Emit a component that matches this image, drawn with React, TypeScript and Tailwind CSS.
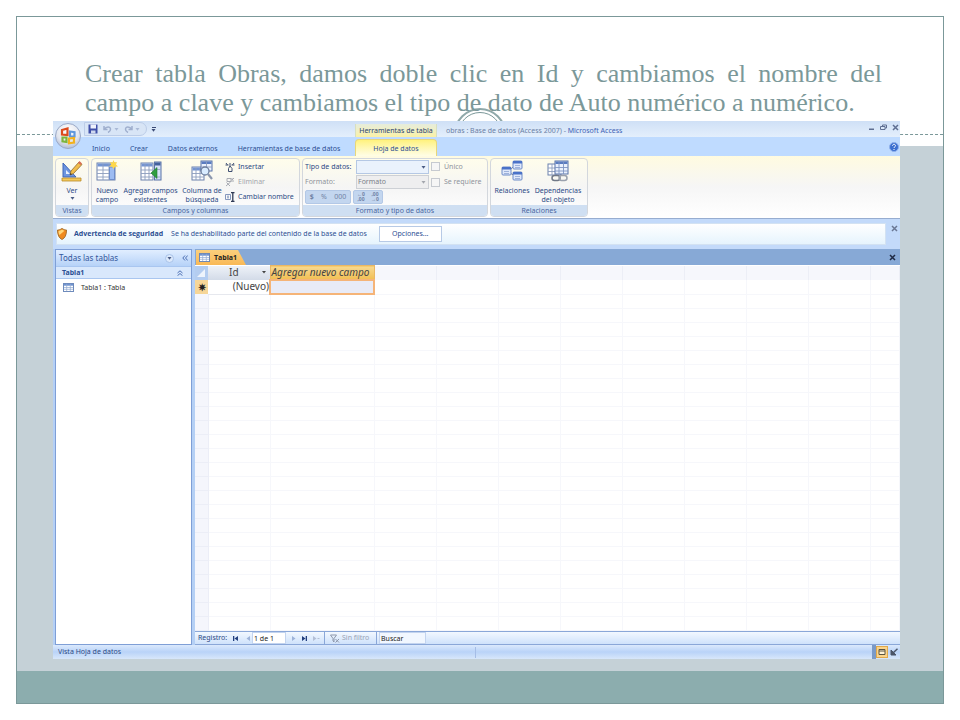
import type { ReactNode } from 'react';

const EMPTY_ROWS = Array.from({ length: 24 }, (_, i) => i);
const EMPTY_COLS = Array.from({ length: 9 }, (_, i) => i);

function OfficeLogo() {
  return (
    <svg viewBox="0 0 28 28" className="h-7 w-7">
      <defs>
        <radialGradient id="orb" cx="0.5" cy="0.3" r="0.75">
          <stop offset="0" stopColor="#ffffff" />
          <stop offset="0.6" stopColor="#e3e6ee" />
          <stop offset="1" stopColor="#a9b6cf" />
        </radialGradient>
      </defs>
      <circle cx="14" cy="14" r="12.5" fill="url(#orb)" stroke="#9aa9c8" />
      <g fill="none" strokeWidth="2.2">
        <path d="M8 8l5.500-1.500v6.500l-5.500-.4z" stroke="#dd4b1e" />
        <path d="M16 9.500l4.500.6v4.400H16z" stroke="#5f97dc" />
        <path d="M8.500 15.500h4v4.500l-4-.6z" stroke="#7cb53c" />
        <path d="M15 16.500l5-.5v4.500l-5 .8z" stroke="#f2b21f" />
      </g>
    </svg>
  );
}

function SheetIcon({ className }: { className: string }) {
  return (
    <svg viewBox="0 0 12 10" className={className}>
      <rect x="0.500" y="0.500" width="11" height="9" fill="#fff" stroke="#5f7fb5" />
      <path d="M1 1h10v2H1z" fill="#6f93d0" />
      <path d="M4 1v8M8 1v8M1 5h10M1 7h10" stroke="#93abd2" strokeWidth="0.800" />
    </svg>
  );
}

function ViewIcon() {
  return (
    <svg viewBox="0 0 22 22" className="h-[22px] w-[22px]">
      <path d="M2 3v14h13z" fill="#6d95e0" stroke="#3f66b8" />
      <path d="M5 10v4h4z" fill="#e9f0fc" />
      <path d="M1 18h19v3H1z" fill="#f4c95a" stroke="#b98a28" strokeWidth="0.800" />
      <path d="M9 15l1-4 8-9 3 2.500-8.500 9z" fill="#f2bd4a" stroke="#8d6a2c" strokeWidth="0.800" />
      <path d="M17 3l1.500-2L21 3.500 19.500 5z" fill="#d86f55" />
      <path d="M9 15l.5-2 1.500 1.200z" fill="#333" />
    </svg>
  );
}

function NewFieldIcon() {
  return (
    <svg viewBox="0 0 22 22" className="h-[22px] w-[22px]">
      <rect x="1" y="3" width="18" height="17" fill="#fff" stroke="#6c82ad" />
      <path d="M1.500 3.500h17v3h-17z" fill="#7394d2" />
      <path d="M7 4v16M13 4v16M1 10h18M1 13.500h18M1 17h18" stroke="#8c9dbd" strokeWidth="0.900" />
      <path d="M13.500 7h5v12.500h-5z" fill="#9dbcf2" stroke="#5f82c4" strokeWidth="0.800" />
      <path d="M17.500 0l1 2.500L21 2l-1 2.500L22 6.500l-3 .3L17.500 9l-1.300-2.300-3-.2 2-2L14 2l2.500.5z" fill="#ffd84a" />
    </svg>
  );
}

function AddFieldsIcon() {
  return (
    <svg viewBox="0 0 22 22" className="h-[22px] w-[22px]">
      <rect x="1" y="3" width="12" height="17" fill="#fff" stroke="#6c82ad" />
      <path d="M1.500 3.500h11v3h-11z" fill="#7394d2" />
      <path d="M5 4v16M9 4v16M1 10h12M1 13.500h12M1 17h12" stroke="#8c9dbd" strokeWidth="0.900" />
      <rect x="14.500" y="2" width="6.500" height="18" fill="#d6e2f8" stroke="#5873a8" />
      <path d="M15 2.500h5.500v3H15z" fill="#44619c" />
      <path d="M15 9.500h5.500M15 17h5.500" stroke="#8c9dbd" strokeWidth="0.800" />
      <path d="M11 13l6-5.500v11z" fill="#2f9e3f" stroke="#1c7a2b" strokeWidth="0.600" />
    </svg>
  );
}

function LookupIcon() {
  return (
    <svg viewBox="0 0 22 22" className="h-[22px] w-[22px]">
      <rect x="1" y="7" width="12" height="13" fill="#fff" stroke="#6c82ad" />
      <path d="M1.500 7.500h11v3h-11z" fill="#7394d2" />
      <path d="M5 8v12M9 8v12M1 13.500h12M1 17h12" stroke="#8c9dbd" strokeWidth="0.900" />
      <rect x="10" y="1" width="11" height="10" fill="#eaf1fd" stroke="#5873a8" />
      <path d="M10.500 1.500h10v2.500h-10z" fill="#5a7cc0" />
      <path d="M15.500 2v9M10 7h11" stroke="#8c9dbd" strokeWidth="0.900" />
      <circle cx="14" cy="11" r="4" fill="#d9ecff" stroke="#6e7f9e" strokeWidth="1.300" />
      <path d="M17 14l4 5" stroke="#8b97ad" strokeWidth="2.200" />
    </svg>
  );
}

function RelationsIcon() {
  return (
    <svg viewBox="0 0 22 22" className="h-[22px] w-[22px]">
      <path d="M8 11l5-5M9 13l5 3" stroke="#7d8797" />
      {[
        [1, 7],
        [12, 1],
        [12, 12],
      ].map(([x, y]) => (
        <g key={`${x}-${y}`}>
          <rect x={x} y={y} width="9" height="8" rx="1" fill="#dfe8fa" stroke="#6d8bc8" />
          <path d={`M${x} ${y}h9v2.500h-9z`} fill="#4a72c8" />
          <path d={`M${x + 2} ${y + 4.5}h5M${x + 2} ${y + 6.5}h5`} stroke="#8ea5d3" strokeWidth="0.800" />
        </g>
      ))}
    </svg>
  );
}

function DependenciesIcon() {
  return (
    <svg viewBox="0 0 22 22" className="h-[22px] w-[22px]">
      <rect x="1" y="4" width="13" height="11" fill="#fff" stroke="#6c82ad" />
      <path d="M5 4v11M9 4v11M1 8h13M1 11.500h13" stroke="#8c9dbd" strokeWidth="0.900" />
      <rect x="8" y="1" width="13" height="13" fill="#eaf1fd" stroke="#5873a8" />
      <path d="M8.500 1.500h12v2.500h-12z" fill="#5a7cc0" />
      <path d="M12 2v12M16.500 2v12M8 7.500h13M8 11h13" stroke="#7f95c2" strokeWidth="0.900" />
      <rect x="5" y="15.500" width="8" height="5" rx="2.500" fill="none" stroke="#707887" strokeWidth="1.500" />
      <rect x="12" y="15.500" width="8" height="5" rx="2.500" fill="none" stroke="#9aa1ad" strokeWidth="1.500" />
    </svg>
  );
}

function Caret({ className = 'fill-[#4a5c85]' }: { className?: string }) {
  return (
    <svg viewBox="0 0 5 3" className={`h-[3px] w-[5px] ${className}`}>
      <path d="M0.500 0h4L2.500 2.800z" />
    </svg>
  );
}

function CloseIcon({ className }: { className: string }) {
  return (
    <svg viewBox="0 0 7 7" className={`h-[7px] w-[7px] ${className}`} fill="none" strokeWidth="1.500">
      <path d="M1 1l5 5M6 1L1 6" />
    </svg>
  );
}

function Group({ title, className, children }: { title: string; className: string; children: ReactNode }) {
  return (
    <section
      className={`flex h-[59px] flex-col overflow-hidden rounded-sm border border-[#d3d7dd] bg-linear-to-b from-[#fffdeb] via-[#f5f5f5] to-white ${className}`}
    >
      <div className="flex flex-1 items-start">{children}</div>
      <h2 className="h-[11px] bg-[#cfdff2] text-center leading-[11px] text-[#4a66a0]">{title}</h2>
    </section>
  );
}

type BigButtonProps = { lines: string[]; menu?: boolean; className: string; children: ReactNode };

function BigButton({ lines, menu, className, children }: BigButtonProps) {
  return (
    <button className={`flex flex-col items-center pt-px leading-[9px] whitespace-nowrap ${className}`}>
      {children}
      <span className="mt-1">{lines[0]}</span>
      {lines[1] && <span>{lines[1]}</span>}
      {menu && <Caret className="mt-[2px] fill-[#4a5c85]" />}
    </button>
  );
}

function TitleBar() {
  return (
    <div className="flex h-4 items-stretch bg-linear-to-b from-[#cfe0f6] to-[#e4effc]">
      <div className="flex w-[302px] items-center pl-[31px]">
        <div className="flex h-[14px] items-center gap-[5px] rounded-r-full border border-[#bccde8] bg-[#d8e5f6] pr-[6px] pl-[3px]">
          <button aria-label="Guardar">
            <svg viewBox="0 0 10 10" className="h-[10px] w-[10px]">
              <path d="M0.500 0.500h9v9h-9z" fill="#3f4fa8" />
              <path d="M2.500 0.500h5.500v4H2.500z" fill="#eef2fc" />
              <path d="M3 6.500h4.500v3H3z" fill="#cfd8ee" />
            </svg>
          </button>
          <button aria-label="Deshacer" className="flex items-center gap-[2px]">
            <svg viewBox="0 0 9 8" className="h-2 w-[9px]" fill="none" stroke="#9fafce" strokeWidth="1.500">
              <path d="M1 1v3.500h3.500M1.500 4C3 1.500 7.500 1 7.500 4.200 7.500 6 6 7 5 7.500" />
            </svg>
            <Caret className="fill-[#a9b9d6]" />
          </button>
          <button aria-label="Rehacer" className="flex items-center gap-[2px]">
            <svg viewBox="0 0 9 8" className="h-2 w-[9px]" fill="none" stroke="#9fafce" strokeWidth="1.500">
              <path d="M8 1v3.500H4.500M7.500 4C6 1.500 1.500 1 1.500 4.200 1.500 6 3 7 4 7.500" />
            </svg>
            <Caret className="fill-[#a9b9d6]" />
          </button>
        </div>
        <button aria-label="Personalizar" className="ml-1 flex flex-col items-center gap-px">
          <span className="h-px w-1 bg-[#3b4a75]" />
          <Caret className="fill-[#3b4a75]" />
        </button>
      </div>
      <div className="mt-[3px] w-[82px] border-x border-[#d8dfc0] bg-linear-to-b from-[#e6ecdc] to-[#fbf2a6] text-center leading-[13px] whitespace-nowrap text-[#2b4370]">
        Herramientas de tabla
      </div>
      <h1 className="ml-[9px] flex-1 pt-[3px] leading-[13px] text-[#6b7fa5]">
        obras : Base de datos (Access 2007) - <span className="text-[#3d62b5]">Microsoft Access</span>
      </h1>
      <div className="flex items-start gap-[5px] pt-[3px] pr-px">
        <button aria-label="Minimizar">
          <svg viewBox="0 0 7 7" className="h-[7px] w-[7px]">
            <path d="M1 4.500h5v1.500H1z" fill="#5f6f92" />
          </svg>
        </button>
        <button aria-label="Restaurar">
          <svg viewBox="0 0 7 7" className="h-[7px] w-[7px]" fill="none" stroke="#5f6f92">
            <path d="M2.500 2.500V1h4v3H5M0.500 2.500h4.500v3H0.500z" />
          </svg>
        </button>
        <button aria-label="Cerrar">
          <CloseIcon className="stroke-[#5f6f92]" />
        </button>
      </div>
    </div>
  );
}

function RibbonTabs() {
  return (
    <nav className="flex h-[19px] items-stretch bg-[#bfdbff] text-[#2c4f93]">
      <div className="flex w-[302px] items-center gap-5 pt-1 pl-[39px] whitespace-nowrap">
        <a href="#inicio">Inicio</a>
        <a href="#crear">Crear</a>
        <a href="#externos">Datos externos</a>
        <a href="#herramientas">Herramientas de base de datos</a>
      </div>
      <a
        href="#hoja"
        className="mt-[2px] flex w-[82px] items-center justify-center rounded-t-sm border-x border-t border-[#e8d77a] bg-linear-to-b from-[#fff27c] to-[#fffde6] pt-[2px]"
      >
        Hoja de datos
      </a>
      <button aria-label="Ayuda" className="mr-px ml-auto">
        <svg viewBox="0 0 10 10" className="h-[10px] w-[10px]">
          <circle cx="5" cy="5" r="4.500" fill="#3b6fd0" stroke="#8fb0ea" />
          <path d="M3.500 3.800c0-2 3-2 3 0 0 1-1.500 1-1.500 2.200M5 7v1" stroke="#fff" fill="none" />
        </svg>
      </button>
    </nav>
  );
}

function Ribbon() {
  return (
    <div className="flex gap-[2px] border-b border-[#97add0] bg-linear-to-b from-[#fffbe0] via-[#f6f6f6] to-white px-[2px] pt-[2px] pb-px text-[#2c4a85]">
      <Group title="Vistas" className="w-[34px]">
        <BigButton lines={['Ver']} menu className="w-full">
          <ViewIcon />
        </BigButton>
      </Group>

      <Group title="Campos y columnas" className="w-[209px]">
        <BigButton lines={['Nuevo', 'campo']} className="w-[30px]">
          <NewFieldIcon />
        </BigButton>
        <BigButton lines={['Agregar campos', 'existentes']} className="w-[57px]">
          <AddFieldsIcon />
        </BigButton>
        <BigButton lines={['Columna de', 'búsqueda']} className="w-[46px]">
          <LookupIcon />
        </BigButton>
        <div className="flex flex-col whitespace-nowrap">
          <button className="flex h-[15px] items-center gap-[3px]">
            <svg viewBox="0 0 10 10" className="h-[10px] w-[10px]" fill="none" stroke="#3f4f72">
              <path d="M1 1l1.500 2M9 1L7.500 3M0.500 3h3M6.500 3h3M3.500 9.500h3.500V6.500L5 4 3.500 6.500zM5 1v3" />
            </svg>
            Insertar
          </button>
          <button className="flex h-[15px] items-center gap-[3px] text-[#a3a6ad]" disabled>
            <svg viewBox="0 0 10 10" className="h-[10px] w-[10px]" fill="none" stroke="#a8abb3">
              <path d="M2 1.500h4v3H2zM1 9l4.500-4M1.500 5.500L5 9M9 1L7 3M6 4h3M7 1v2" />
            </svg>
            Eliminar
          </button>
          <button className="flex h-4 items-center gap-[3px]">
            <svg viewBox="0 0 10 10" className="h-[10px] w-[10px]" fill="none" stroke="#2f3a55">
              <path d="M0.500 2.500h5v5h-5zM2 4.200h2M2 5.800h2" stroke="#8497bd" />
              <path d="M6 0.500h3.500M6 9.500h3.500M7.800 0.500v9" strokeWidth="1.300" />
            </svg>
            Cambiar nombre
          </button>
        </div>
      </Group>

      <Group title="Formato y tipo de datos" className="w-[186px]">
        <div className="flex flex-col pl-[2px] whitespace-nowrap">
          <div className="flex h-[15px] items-center">
            <label htmlFor="tipo" className="w-[51px]">
              Tipo de datos:
            </label>
            <div className="relative mr-[2px]">
              <select id="tipo" className="block h-[14px] w-[73px] appearance-none border border-[#b5c8e4] bg-[#eaf2fc]" />
              <Caret className="pointer-events-none absolute top-[6px] right-[3px] fill-[#4a5c85]" />
            </div>
            <input id="unico" type="checkbox" className="mr-1 h-[9px] w-[9px] appearance-none border border-[#c6cad0] bg-[#f6f6f6]" />
            <label htmlFor="unico" className="text-[#8f939c]">
              Único
            </label>
          </div>
          <div className="flex h-4 items-center text-[#8f939c]">
            <label htmlFor="formato" className="w-[51px]">
              Formato:
            </label>
            <div className="relative mr-[2px]">
              <select
                id="formato"
                disabled
                className="block h-[14px] w-[73px] appearance-none border border-[#cdd0d5] bg-[#eeeeef] pl-px text-[#7b7f88] opacity-100"
              >
                <option>Formato</option>
              </select>
              <Caret className="pointer-events-none absolute top-[6px] right-[3px] fill-[#a3a6ad]" />
            </div>
            <input id="requiere" type="checkbox" className="mr-1 h-[9px] w-[9px] appearance-none border border-[#c6cad0] bg-[#f6f6f6]" />
            <label htmlFor="requiere">Se requiere</label>
          </div>
          <div className="flex h-[14px] gap-[2px] text-[#7183a6]">
            <div className="flex w-[46px] items-center justify-around rounded-xs border border-[#b3c8e6] bg-[#c3d6ef]">
              <button className="font-bold">$</button>
              <button>%</button>
              <button>000</button>
            </div>
            <div className="flex w-[30px] items-center justify-around rounded-xs border border-[#b3c8e6] bg-[#c3d6ef] text-[5px] leading-[5px] font-bold">
              <button>
                <span className="block">←0</span>
                <span className="block">,00</span>
              </button>
              <button>
                <span className="block">,00</span>
                <span className="block">→0</span>
              </button>
            </div>
          </div>
        </div>
      </Group>

      <Group title="Relaciones" className="w-[98px]">
        <BigButton lines={['Relaciones']} className="w-[42px]">
          <RelationsIcon />
        </BigButton>
        <BigButton lines={['Dependencias', 'del objeto']} className="w-[50px]">
          <DependenciesIcon />
        </BigButton>
      </Group>
    </div>
  );
}

function MessageBar() {
  return (
    <div className="flex items-start bg-[#c3dafa] py-1 pr-[2px] pl-[3px] text-[#2c4f93]">
      <div className="flex h-[22px] flex-1 items-center border border-[#d3e2f2] bg-linear-to-b from-white to-[#e6f4fd]">
        <svg viewBox="0 0 10 12" className="h-3 w-[10px]">
          <path d="M5 0.500C7 1.800 8.500 2 9.500 2c0 5-1.500 8-4.500 9.500C2 10 .5 7 .5 2 1.500 2 3 1.800 5 .5z" fill="#f08a1f" stroke="#a6702f" />
          <path d="M5 1.500C3.500 2.500 2.500 2.800 1.500 2.900 1.500 5 2 6 2.500 7L7.500 2.800C6.500 2.600 6 2.200 5 1.500z" fill="#ffd77a" />
        </svg>
        <strong className="ml-[7px] font-['Open_Sans',sans-serif]">Advertencia de seguridad</strong>
        <span className="mr-3 ml-2">Se ha deshabilitado parte del contenido de la base de datos</span>
        <button className="h-4 w-[63px] border border-[#b7cae6] bg-white">Opciones...</button>
      </div>
      <button aria-label="Cerrar advertencia" className="ml-[5px] pt-[2px]">
        <CloseIcon className="stroke-[#6a7794]" />
      </button>
    </div>
  );
}

function NavPane() {
  return (
    <aside className="ml-[2px] flex w-[137px] flex-col border border-[#7f9fd6] bg-white">
      <div className="flex h-4 items-center bg-linear-to-b from-[#e1eeff] to-[#b6d2f8] px-[3px] text-[8px] text-[#33569b]">
        <span className="flex-1">Todas las tablas</span>
        <button
          aria-label="Filtrar tablas"
          className="mr-2 flex h-[9px] w-[9px] items-center justify-center rounded-full border border-[#a9c3ea] bg-[#dce9fb]"
        >
          <Caret />
        </button>
        <button aria-label="Contraer panel">
          <svg viewBox="0 0 6 6" className="h-[6px] w-[6px]" fill="none" stroke="#4b6fb3">
            <path d="M3 0.500L0.800 3 3 5.500M5.700 0.500L3.500 3l2.200 2.500" />
          </svg>
        </button>
      </div>
      <h2 className="flex h-[13px] items-center justify-between border-y border-[#a9c6f0] bg-[#d9e8fc] pr-2 pl-[6px] text-[7px] font-bold text-[#2c4f93]">
        Tabla1
        <svg viewBox="0 0 6 6" className="h-[6px] w-[6px]" fill="none" stroke="#4b6fb3">
          <path d="M0.500 3L3 0.800 5.500 3M0.500 5.700L3 3.500l2.500 2.200" />
        </svg>
      </h2>
      <a href="#tabla1" className="flex h-[17px] items-center gap-[7px] pl-[7px] text-[#333]">
        <SheetIcon className="h-[9px] w-[11px]" />
        Tabla1 : Tabla
      </a>
    </aside>
  );
}

function DataSheet() {
  return (
    <table className="w-full table-fixed border-collapse text-[10px] leading-[13px] text-[#444]">
      <colgroup>
        <col className="w-[13px]" />
        <col className="w-[62px]" />
        <col className="w-[104px]" />
        {EMPTY_COLS.slice(1).map((i) => (
          <col key={i} className="w-[62px]" />
        ))}
        <col />
      </colgroup>
      <thead>
        <tr className="h-[14px]">
          <th className="bg-[#b4cdf0] p-0">
            <svg viewBox="0 0 13 13" className="block h-[13px] w-[13px]">
              <path d="M10 3v8H2z" fill="#eef4fc" />
            </svg>
          </th>
          <th className="bg-linear-to-b from-[#eef2f8] to-[#d3dbe8] p-0 font-normal">
            <span className="flex items-center justify-between pr-1 pl-[21px]">
              Id
              <svg viewBox="0 0 4 3" className="h-[3px] w-1 fill-[#444]">
                <path d="M0 0h4L2 2.500z" />
              </svg>
            </span>
          </th>
          <th className="border border-[#eab765] bg-linear-to-b from-[#f8d990] to-[#f1bf52] p-0 pl-px text-left font-normal whitespace-nowrap italic">
            Agregar nuevo campo
          </th>
          {EMPTY_COLS.map((i) => (
            <th key={i} className="border-r border-[#eceef6] bg-[#f6f7fc] p-0" />
          ))}
        </tr>
      </thead>
      <tbody>
        <tr className="h-[14px]">
          <td className="bg-[#f6d698] p-0 text-center leading-[12px] font-bold text-[#222]">✷</td>
          <td className="border-b border-[#e6e8ee] p-0 text-right">(Nuevo)</td>
          <td className="border-2 border-[#f5b478] bg-[#e8ebf7] p-0" />
          {EMPTY_COLS.map((i) => (
            <td key={i} className="border-r border-b border-[#f6f7fb] p-0" />
          ))}
        </tr>
        {EMPTY_ROWS.map((row) => (
          <tr key={row} className="h-[14px]">
            <td className="border-r border-b border-[#eceef7] bg-[#f5f6fc] p-0" />
            <td className="border-r border-b border-[#f6f7fb] p-0" />
            <td className="border-r border-b border-[#f6f7fb] p-0" />
            {EMPTY_COLS.map((i) => (
              <td key={i} className="border-r border-b border-[#f6f7fb] p-0" />
            ))}
          </tr>
        ))}
      </tbody>
    </table>
  );
}

function RecordBar() {
  return (
    <div className="flex h-[14px] items-center border-y border-[#8aa7d8] bg-linear-to-b from-[#f2f8ff] to-[#cfe2fb] pl-[3px] whitespace-nowrap text-[#2c4a85]">
      <span className="w-[35px]">Registro:</span>
      <button aria-label="Primer registro">
        <svg viewBox="0 0 5 5" className="h-[5px] w-[5px] fill-[#23407f]">
          <path d="M0 0h1.300v5H0zM5 0v5L1.500 2.500z" />
        </svg>
      </button>
      <button aria-label="Registro anterior" className="ml-2">
        <svg viewBox="0 0 4 5" className="h-[5px] w-1 fill-[#9db3d9]">
          <path d="M4 0v5L0.500 2.500z" />
        </svg>
      </button>
      <input
        aria-label="Registro actual"
        defaultValue="1 de 1"
        className="ml-[2px] h-3 w-[34px] border border-[#c3d4ef] bg-white pl-px text-[#222]"
      />
      <button aria-label="Registro siguiente" className="ml-[6px]">
        <svg viewBox="0 0 4 5" className="h-[5px] w-1 fill-[#9db3d9]">
          <path d="M0 0v5l3.500-2.500z" />
        </svg>
      </button>
      <button aria-label="Último registro" className="ml-[6px]">
        <svg viewBox="0 0 5 5" className="h-[5px] w-[5px] fill-[#23407f]">
          <path d="M3.700 0H5v5H3.700zM0 0v5l3.500-2.500z" />
        </svg>
      </button>
      <button aria-label="Nuevo registro" className="ml-[6px]">
        <svg viewBox="0 0 7 5" className="h-[5px] w-[7px] fill-[#b3bfd6]">
          <path d="M0 0v5l3.500-2.500zM4.500 2h2v1h-2z" />
        </svg>
      </button>
      <button
        disabled
        className="ml-1 flex h-full w-[53px] items-center gap-[2px] border-x border-[#8aa7d8] pl-[5px] text-[#9aa3b5]"
      >
        <svg viewBox="0 0 10 9" className="h-[9px] w-[10px]" fill="none" stroke="#8d97ab">
          <path d="M0.500 1h6L4 4.500V8L3 7V4.500zM5.500 5l3.500 3.500M9 5L5.500 8.500" />
        </svg>
        Sin filtro
      </button>
      <input
        aria-label="Buscar"
        defaultValue="Buscar"
        className="ml-[2px] h-3 w-[47px] border border-[#c3d4ef] bg-[#f1f7ff] pl-px text-[#222]"
      />
    </div>
  );
}

function StatusBar() {
  return (
    <footer className="flex h-[14px] items-center bg-linear-to-b from-[#dbe9fc] via-[#b9d3f8] to-[#d8e7fa] pl-[5px] text-[#2c4a85]">
      <span className="flex h-[11px] w-[418px] items-center border-r border-[#a5bde6]">Vista Hoja de datos</span>
      <div className="ml-auto flex h-full items-center border-l-4 border-[#7a9ac8]">
        <button
          aria-label="Vista Hoja de datos"
          className="flex h-3 w-3 items-center justify-center border border-[#e0a94c] bg-[#fbd48a]"
        >
          <svg viewBox="0 0 8 8" className="h-2 w-2" fill="#fff3d6" stroke="#5a5442">
            <path d="M1 1.500h6v5H1zM1 3h6" />
          </svg>
        </button>
        <button aria-label="Vista Diseño" className="flex h-3 w-3 items-center justify-center">
          <svg viewBox="0 0 8 8" className="h-2 w-2" fill="#4b5568" stroke="#4b5568">
            <path d="M1 2v5h5z" />
            <path d="M3 5L7.500 0.800" strokeWidth="1.500" />
          </svg>
        </button>
      </div>
    </footer>
  );
}

export default function App() {
  return (
    <div className="flex min-h-screen bg-white p-4">
      <main className="grid flex-1 border border-[#7b9899]">
        {/* Slide backdrop */}
        <div className="flex flex-col [grid-area:1/1]">
          <div className="relative h-[118px] border-b border-dashed border-[#7b9899]">
            <div className="absolute top-[91px] left-1/2 h-[52px] w-[52px] -translate-x-1/2 rounded-full border-2 border-[#8fa8a9] p-[2px]">
              <div className="h-full rounded-full border border-[#7b9899]" />
            </div>
          </div>
          <div className="h-[11px]" />
          <div className="flex-1 bg-[#c5d1d7]" />
          <div className="h-8 bg-[#8cadae]" />
        </div>

        {/* Slide content */}
        <div className="relative flex min-w-0 flex-col pt-[42px] pr-[43px] pb-[44px] pl-9 [grid-area:1/1]">
          <p className="mb-1 pr-[18px] pl-8 text-justify font-['Liberation_Serif',serif] text-[26px] leading-[29px] text-[#7b9899]">
            Crear tabla Obras, damos doble clic en Id y cambiamos el nombre del campo a clave y cambiamos el tipo de dato
            de Auto numérico a numérico.
          </p>

          <div className="relative flex flex-1 flex-col overflow-hidden bg-[#bfdbff] font-['Noto_Sans',sans-serif] text-[7px] leading-[10px]">
            <button aria-label="Botón de Office" className="absolute top-px left-px">
              <OfficeLogo />
            </button>
            <TitleBar />
            <RibbonTabs />
            <Ribbon />
            <MessageBar />
            <div className="flex flex-1 gap-[3px] bg-[#b5d0f5]">
              <NavPane />
              <div className="flex min-w-0 flex-1 flex-col bg-white">
                <div className="flex h-4 items-end justify-between bg-[#87a9d6] pr-1 pl-px">
                  <a
                    href="#tabla1"
                    className="flex h-[15px] w-[50px] items-center gap-1 bg-linear-to-b from-[#fbcf7c] to-[#f9b956] pl-[3px] font-['Open_Sans',sans-serif] font-bold text-[#222] [clip-path:polygon(0_0,84%_0,100%_100%,0_100%)]"
                  >
                    <SheetIcon className="h-[9px] w-[11px]" />
                    Tabla1
                  </a>
                  <button aria-label="Cerrar tabla" className="self-center">
                    <CloseIcon className="stroke-[#1f2a44]" />
                  </button>
                </div>
                <div className="flex-1">
                  <DataSheet />
                </div>
                <RecordBar />
              </div>
            </div>
            <StatusBar />
          </div>
        </div>
      </main>
    </div>
  );
}
